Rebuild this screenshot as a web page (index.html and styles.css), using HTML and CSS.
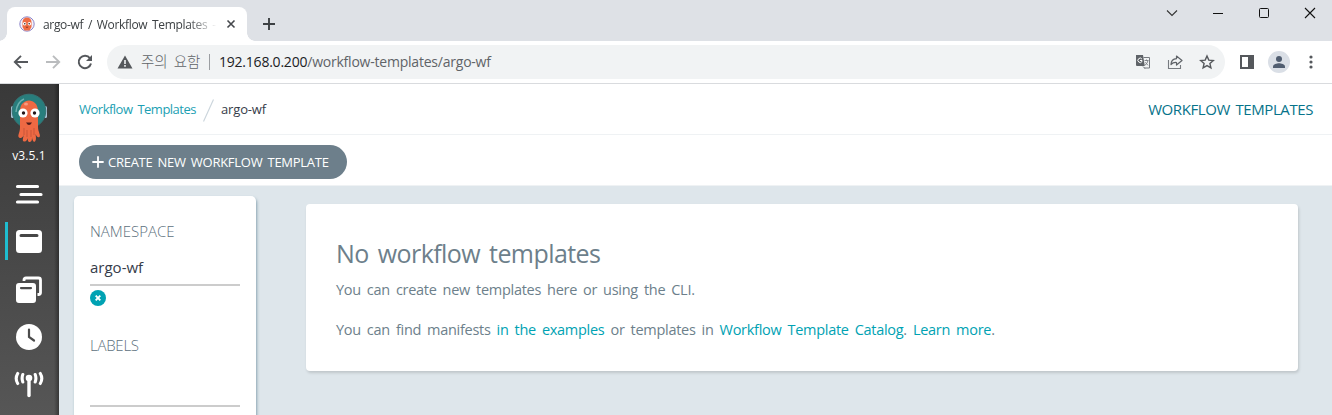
FILE: index.html
```html
<!DOCTYPE html>
<html lang="ko">
<head>
<meta charset="utf-8">
<title>argo-wf / Workflow Templates</title>
<link rel="stylesheet" href="styles.css">
</head>
<body>
<div class="browser">
  <div class="tabstrip">
    <div class="tab">
      <svg class="favicon" width="16" height="16" viewBox="0 0 16 16"><circle cx="8" cy="8" r="7.200" fill="#f4f1fa" stroke="#8d86c9" stroke-width="1"/><path d="M3.500 6a4.500 4.500 0 0 1 9 0v5l-2 3.500h-5l-2-3.500z" fill="#ee6b43"/><circle cx="5.600" cy="7.700" r="1.700" fill="#fff"/><circle cx="10.400" cy="7.700" r="1.700" fill="#fff"/><circle cx="5.800" cy="7.700" r=".8" fill="#322"/><circle cx="10.200" cy="7.700" r=".8" fill="#322"/><path d="M6.500 10.800h3q-1.500 2-3 0" fill="#6b2418"/></svg>
      <span class="tab-title">argo-wf / Workflow Templates -</span>
      <svg class="tab-close" width="10" height="10" viewBox="0 0 10 10"><path d="M1.500 1.500l7 7M8.500 1.500l-7 7" stroke="#45484c" stroke-width="1.600"/></svg>
    </div>
    <svg class="new-tab" width="12" height="12" viewBox="0 0 12 12"><path d="M6 0v12M0 6h12" stroke="#3c4043" stroke-width="1.900"/></svg>
    <div class="window-controls">
      <svg width="12" height="12" viewBox="0 0 12 12"><path d="M1 3.500l5 5 5-5" fill="none" stroke="#333" stroke-width="1.100"/></svg>
      <svg width="12" height="12" viewBox="0 0 12 12"><path d="M1 6.500h10" stroke="#111"/></svg>
      <svg width="12" height="12" viewBox="0 0 12 12"><rect x="1.500" y="1.500" width="9" height="9" rx="1" fill="none" stroke="#111"/></svg>
      <svg width="12" height="12" viewBox="0 0 12 12"><path d="M1 1l10 10M11 1L1 11" stroke="#111" stroke-width="1.100"/></svg>
    </div>
  </div>
  <div class="toolbar">
    <div class="nav">
      <svg width="16" height="16" viewBox="0 0 16 16"><path d="M15 8H2M8 1.800L1.800 8 8 14.200" fill="none" stroke="#55585c" stroke-width="1.900"/></svg>
      <svg width="16" height="16" viewBox="0 0 16 16"><path d="M1 8h13M8 1.800L14.200 8 8 14.200" fill="none" stroke="#babcbe" stroke-width="1.900"/></svg>
      <svg width="16" height="16" viewBox="0 0 16 16"><path d="M13 4.300A6.200 6.200 0 1 0 14 9.500" fill="none" stroke="#55585c" stroke-width="2"/><path d="M15 1v6H9z" fill="#55585c"/></svg>
    </div>
    <div class="omnibox">
      <svg width="16" height="14" viewBox="0 0 16 14"><path d="M8 .5L15.500 13.500H.5z" fill="#55585c"/><path d="M8 5v4M8 10v1.800" stroke="#f1f3f4" stroke-width="1.600"/></svg>
      <span class="warning">주의 요함</span>
      <span class="separator"></span>
      <span class="url"><b>192.168.0.200</b>/workflow-templates/argo-wf</span>
      <div class="page-actions">
        <svg width="16" height="16" viewBox="0 0 16 16"><path d="M1 1h7l1.800 11H2a1 1 0 0 1-1-1z" fill="#5f6368"/><path d="M8.500 3.500h6v10.500H9M8 12.500l2 2" fill="none" stroke="#777b80"/><path d="M6.900 5A2.200 2.200 0 1 0 7 7.500V6.500H5" fill="none" stroke="#fff"/><path d="M9.500 6.500h4M11.500 5.500v1M13 6.700q-.7 3-3 4.500M10.300 8.300l2.700 3" fill="none" stroke="#777b80" stroke-width=".9"/></svg>
        <svg width="16" height="16" viewBox="0 0 16 16"><path d="M1.500 6v8.500h12V11" fill="none" stroke="#777b80" stroke-width="1.100"/><path d="M4 10.500Q4.200 5 9.500 4.700V2L15 6.500 9.500 11V8.500Q6 8.200 4 10.500z" fill="none" stroke="#5f6368" stroke-width="1.200" stroke-linejoin="round"/></svg>
        <svg width="16" height="16" viewBox="0 0 16 16"><path d="M8 2l1.800 4.100 4.500.4-3.400 3 1 4.400L8 11.600l-3.900 2.300 1-4.400-3.400-3 4.500-.4z" fill="none" stroke="#55585c" stroke-width="1.400"/></svg>
      </div>
    </div>
    <div class="browser-actions">
      <svg width="14" height="14" viewBox="0 0 14 14"><path fill-rule="evenodd" d="M0 0h14v14H0zM2 2v10h6V2z" fill="#55585c"/></svg>
      <svg width="22" height="22" viewBox="0 0 22 22"><circle cx="11" cy="11" r="11" fill="#dadfe6"/><circle cx="11" cy="8" r="3" fill="#505d70"/><path d="M5 17v-1.500c0-2 4-3.200 6-3.200s6 1.200 6 3.200V17z" fill="#505d70"/></svg>
      <svg width="4" height="14" viewBox="0 0 4 14"><g fill="#55585c"><circle cx="2" cy="2" r="1.600"/><circle cx="2" cy="7" r="1.600"/><circle cx="2" cy="12" r="1.600"/></g></svg>
    </div>
  </div>
</div>
<div class="app">
  <nav class="sidebar">
    <svg class="logo" width="38" height="50" viewBox="0 0 38 50"><rect x="1" y="13" width="3" height="12" rx="1.500" fill="#a9c4d8"/><rect x="34" y="13" width="3" height="12" rx="1.500" fill="#a9c4d8"/><circle cx="19" cy="18" r="16.800" fill="#287e7d" stroke="#377374"/><path d="M6 19Q7 9 14 6" fill="none" stroke="#6cb1af" stroke-width="1.500"/><path d="M10 18c0-14 18-14 18 0v16c0 5 3 8 1.500 10-2 1-3-1-4-3 .5 3 1 6-.5 7.500s-3-2-3-5c0 3 0 5-2 5.500s-3-3-2-6c-.5 4-2 6-4 5.500s-1-3.500 0-7c-1 3-3 4.500-5 3s1-5 1-10z" fill="#ee6943"/><path d="M14 35v7M17 37v7M21 37v7M24 35v7" stroke="#c9563a" stroke-width="1"/><ellipse cx="16" cy="11" rx="2" ry="1.500" fill="#f89b80"/><circle cx="13" cy="20" r="4.600" fill="#fff"/><circle cx="25" cy="20" r="4.600" fill="#fff"/><circle cx="13.500" cy="20" r="1.700" fill="#251719"/><circle cx="24.500" cy="20" r="1.700" fill="#251719"/><path d="M16 29.500h6q-3 5-6 0" fill="#501d1c"/></svg>
    <span class="version">v3.5.1</span>
    <a class="item"><svg width="28" height="26" viewBox="0 0 28 26"><path d="M2.500 4.500h20M6 12.500h20M2.500 20h20" stroke="#fff" stroke-width="3.200" stroke-linecap="round"/></svg></a>
    <a class="item selected"><svg width="28" height="26" viewBox="0 0 28 26"><path fill-rule="evenodd" d="M4.500 1h19A3.500 3.500 0 0 1 27 4.500v16a3.500 3.500 0 0 1-3.500 3.500h-19A3.500 3.500 0 0 1 1 20.500v-16A3.500 3.500 0 0 1 4.500 1zM6 5a1.500 1.500 0 0 0 0 3h16a1.500 1.500 0 0 0 0-3z" fill="#fff"/></svg></a>
    <a class="item"><svg width="28" height="28" viewBox="0 0 28 28"><path d="M9 5V4q0-2 2-2h12.500q2 0 2 2v12.500q0 2-2 2H22.500" fill="none" stroke="#fff" stroke-width="2.800"/><path fill-rule="evenodd" d="M4 7h14a3 3 0 0 1 3 3V24a3 3 0 0 1-3 3H4a3 3 0 0 1-3-3V10a3 3 0 0 1 3-3zM6 11a1 1 0 0 0 0 2.200h10a1 1 0 0 0 0-2.200z" fill="#fff"/></svg></a>
    <a class="item"><svg width="28" height="28" viewBox="0 0 28 28"><circle cx="14" cy="14" r="13" fill="#fff"/><path d="M14 6.500V14l5 3.500" fill="none" stroke="#4b4b4b" stroke-width="2.200" stroke-linecap="round"/></svg></a>
    <a class="item"><svg width="30" height="28" viewBox="0 0 30 28"><circle cx="15" cy="7" r="3.300" fill="#fff"/><path d="M15 8v16.500" stroke="#fff" stroke-width="3.400" stroke-linecap="round"/><path d="M8.800 3.500q-1.400 3.700 0 7.500M21.200 3.500q1.400 3.700 0 7.500M3.700 2.500q-3 5 0 10M26.300 2.500q3 5 0 10" fill="none" stroke="#fff" stroke-width="3.100" stroke-linecap="round"/></svg></a>
  </nav>
  <main class="page">
    <header class="page-header">
      <div class="breadcrumbs"><a>Workflow Templates</a><svg width="11" height="23" viewBox="0 0 11 23"><path d="M.5 22.500L10.500.5" stroke="#cbd5dc" stroke-width="1.200"/></svg><span>argo-wf</span></div>
      <span class="page-title">WORKFLOW TEMPLATES</span>
    </header>
    <div class="actions">
      <button class="create"><svg width="13" height="12" viewBox="0 0 13 12"><path d="M7 1v10M2 6h10" stroke="#fff" stroke-width="1.800" stroke-linecap="round"/></svg><span>CREATE NEW WORKFLOW TEMPLATE</span></button>
    </div>
    <div class="content">
      <aside class="filters">
        <p class="label namespace">NAMESPACE</p>
        <div class="input"><span>argo-wf</span></div>
        <svg class="clear" width="16" height="16" viewBox="0 0 16 16"><circle cx="8" cy="8" r="8" fill="#00a2b3"/><path d="M5.700 5.700l4.600 4.600M10.300 5.700l-4.600 4.600" stroke="#fff" stroke-width="1.900"/></svg>
        <p class="label labels">LABELS</p>
        <div class="input tags"></div>
      </aside>
      <section class="empty">
        <h4>No workflow templates</h4>
        <p class="line1">You can create new templates here or using the CLI.</p>
        <p class="line2">You can find manifests <a>in the examples</a> or templates in <a>Workflow Template Catalog</a>. <a>Learn more</a>.</p>
      </section>
    </div>
  </main>
</div>
</body>
</html>
```
FILE: styles.css
```css
* { box-sizing: border-box; }
body { margin: 0; width: 1332px; height: 415px; overflow: hidden; font-family: "Open Sans", "Noto Sans CJK KR", sans-serif; color: #6d7f8b; background: #dee6eb; }
svg { display: block; flex: none; }
p, h4 { margin: 0; font-weight: 400; }
span, p, h4 { white-space: nowrap; }

.tabstrip { height: 41px; background: #dee1e6; display: flex; padding: 7px 16px 0 7px; }
.tab { position: relative; width: 240px; height: 34px; background: #fff; border-radius: 8px 8px 0 0; display: flex; align-items: center; padding: 0 11px 0 12px; }
.tab::before, .tab::after { content: ""; position: absolute; bottom: 0; width: 8px; height: 8px; }
.tab::before { left: -8px; background: radial-gradient(circle at 0 0, transparent 7.500px, #fff 8px); }
.tab::after { right: -8px; background: radial-gradient(circle at 100% 0, transparent 7.500px, #fff 8px); }
.tab-title { margin-left: 8px; width: 175px; overflow: hidden; font-size: 12px; letter-spacing: -.33px; word-spacing: 2px; color: #3c4043; -webkit-mask-image: linear-gradient(90deg, #000 145px, transparent 174px); mask-image: linear-gradient(90deg, #000 145px, transparent 174px); }
.tab-close { margin-left: auto; }
.new-tab { margin: 11px 0 0 16px; }
.window-controls { margin-left: auto; display: flex; gap: 34px; }

.toolbar { height: 43px; background: #fff; border-bottom: 1px solid #d9dbde; display: flex; align-items: center; padding: 0 19px 0 13px; }
.nav { display: flex; gap: 16px; }
.omnibox { margin-left: 14px; width: 1118px; height: 34px; border-radius: 17px; background: #f1f3f4; display: flex; align-items: center; padding: 0 10px; font-size: 14px; }
.warning { margin-left: 8px; width: 61px; color: #5f6368; font-family: "Noto Sans CJK KR", sans-serif; font-size: 14.500px; font-weight: 300; word-spacing: 2px; line-height: 20px; padding-bottom: 2px; }
.separator { width: 1px; height: 16px; margin: 0 9px 0 7px; background: #9b9ea2; }
.url { color: #5f6368; letter-spacing: -.22px; padding-bottom: 1px; }
.url b { color: #202124; font-weight: 400; }
.page-actions { margin-left: auto; display: flex; gap: 16px; }
.browser-actions { margin-left: auto; display: flex; align-items: center; gap: 14px; }
.browser-actions svg:last-child { margin-left: 5px; }

.app { display: flex; height: 331px; }
.sidebar { width: 59px; flex: none; display: flex; flex-direction: column; align-items: center; padding-right: 1px; background: linear-gradient(90deg, transparent 54px, rgba(0,0,0,.35)), linear-gradient(#393939, #565656); }
.logo { margin-top: 9px; }
.version { margin-top: 4px; height: 18px; line-height: 18px; font-size: 12px; letter-spacing: .1px; color: #fff; }
.item { width: 58px; height: 47.500px; display: flex; align-items: center; justify-content: center; }
.version + .item { margin-top: 6px; }
.item.selected { background: linear-gradient(#1fbdd0, #1fbdd0) 5px 3px / 3px 38px no-repeat; }

.page { flex: 1; display: flex; flex-direction: column; min-width: 0; }
.page-header { height: 51px; background: #fff; border-bottom: 1px solid #eff2f4; display: flex; align-items: center; justify-content: space-between; padding: 0 19px 0 20px; }
.breadcrumbs { display: flex; align-items: center; font-size: 13px; }
.breadcrumbs a { color: #1c9fb3; letter-spacing: -.5px; word-spacing: 2px; }
.breadcrumbs svg { margin: 3px 7px 0; }
.breadcrumbs span { color: #363c4a; letter-spacing: -.15px; }
.page-title { font-size: 15px; color: #07738a; letter-spacing: -.41px; word-spacing: 2px; }
.actions { height: 51px; flex: none; background: #fff; border-bottom: 1px solid #eff2f4; padding: 10px 20px; }
.create { width: 268px; height: 34px; border: 0; border-radius: 17px; padding: 0 12px; display: flex; align-items: center; gap: 4px; background: #6d7f8b; color: #fff; font: 400 13px "Open Sans", sans-serif; letter-spacing: -.27px; word-spacing: 2px; }
.content { flex: 1; display: flex; align-items: flex-start; padding: 10px 34px 0 15px; overflow: hidden; background: #dee6eb; }
.filters { width: 182px; height: 240px; flex: none; background: #fff; border-radius: 5px; padding: 24px 16px 0; box-shadow: 1px 2px 3px rgba(80,120,140,.6); }
.label { height: 22px; line-height: 22px; font-size: 15px; font-weight: 300; color: #5d707d; }
.namespace { letter-spacing: 0; }
.input { height: 44px; padding-top: 12px; border-bottom: 2px solid #ccc; line-height: 26px; font-size: 15px; color: #363c4a; }
.clear { margin-top: 4px; }
.labels { margin-top: 28px; letter-spacing: -.25px; }
.tags { height: 51px; }
.empty { margin: 8px 0 0 50px; flex: 1; height: 167px; background: #fff; border-radius: 4px; box-shadow: 1px 2px 3px rgba(0,0,0,.14); padding: 30px; }
.empty h4 { height: 41px; line-height: 38px; font-size: 25px; letter-spacing: -.56px; word-spacing: 3px; }
.empty p { height: 30px; line-height: 30px; font-size: 14.500px; letter-spacing: -.28px; word-spacing: 2.500px; }
.empty .line2 { margin-top: 10px; }
.empty a { color: #00a2b3; }
```
